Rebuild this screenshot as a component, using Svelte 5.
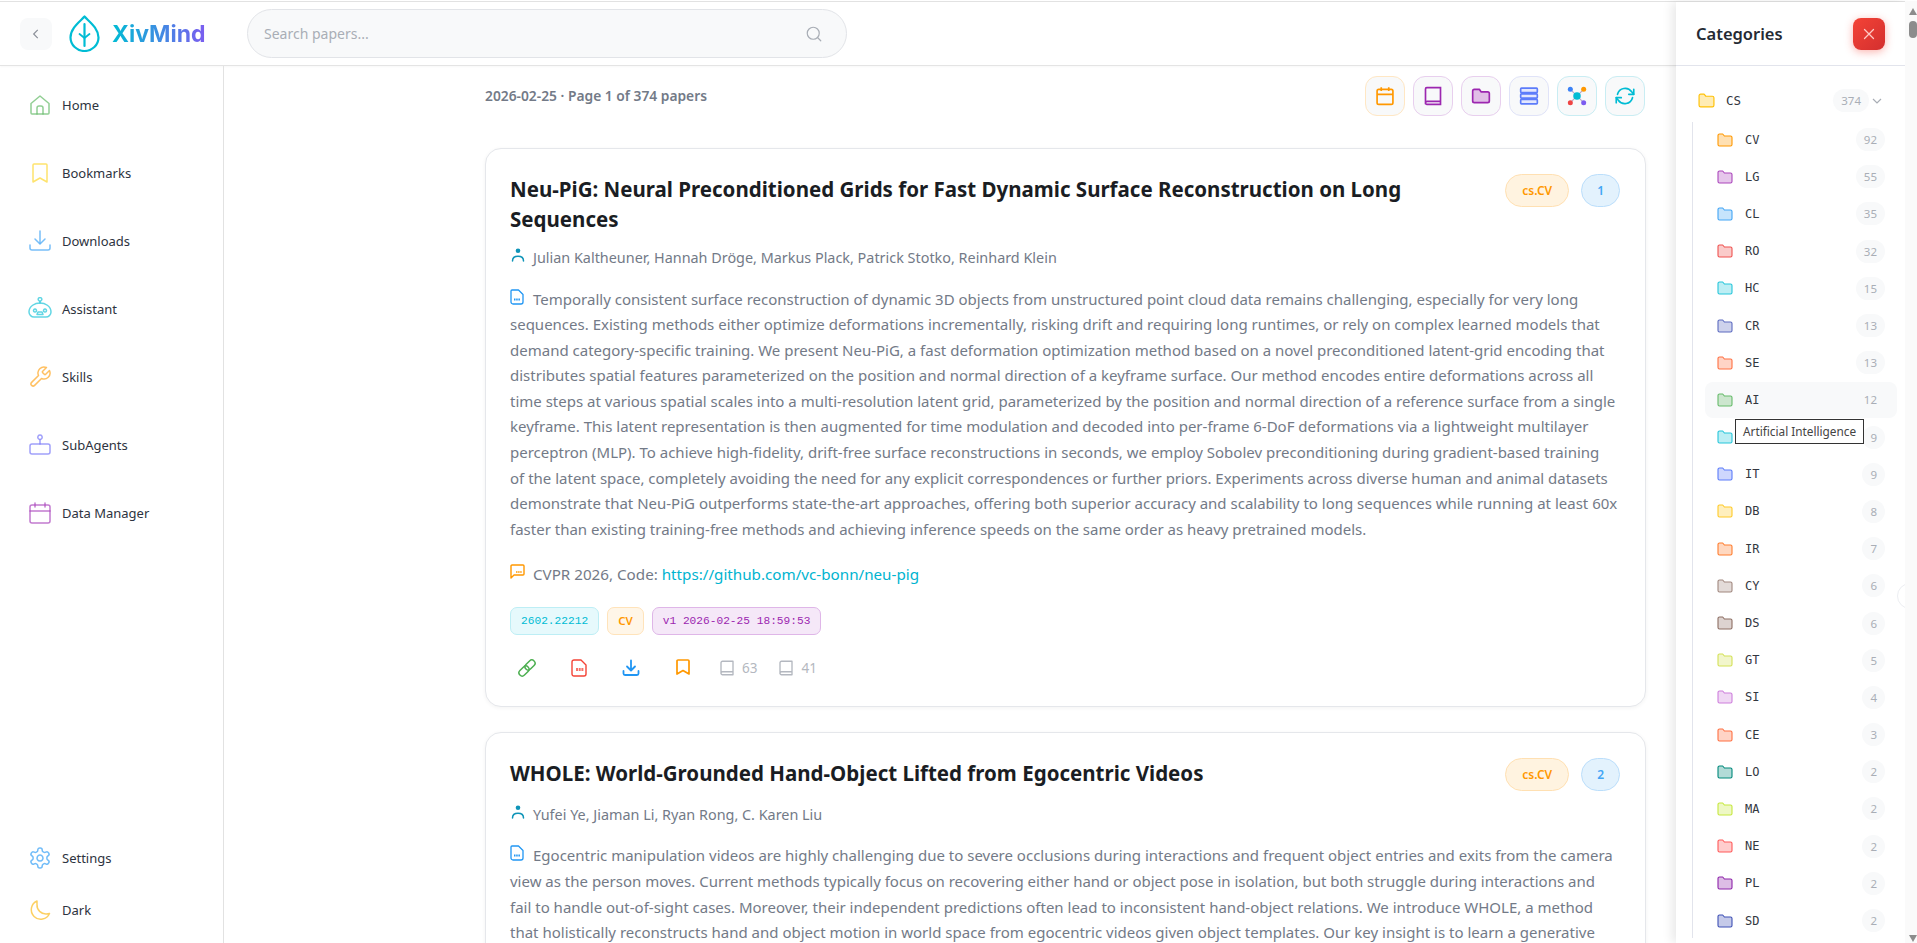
<script>
	const navTop = [
		{ label: 'Home', color: '#66bb6a', paths: ['M3 10.5 12 3l9 7.5V20a1 1 0 0 1-1 1H4a1 1 0 0 1-1-1z', 'M9 21v-6a2 2 0 0 1 2-2h2a2 2 0 0 1 2 2v6'] },
		{ label: 'Bookmarks', color: '#fdd835', paths: ['M6 3h12a1 1 0 0 1 1 1v17l-7-4-7 4V4a1 1 0 0 1 1-1z'] },
		{ label: 'Downloads', color: '#42a5f5', paths: ['M12 2v12', 'M7 10l5 5 5-5', 'M2 16v3a2 2 0 0 0 2 2h16a2 2 0 0 0 2-2v-3'] },
		{ label: 'Assistant', color: '#26c6da', paths: ['M12 6C7 6 1 9 1 15c0 3 2.500 5 5 5h12c2.500 0 5-2 5-5 0-6-6-9-11-9z', 'M12 6V4.500', 'M12 .5a1.800 1.800 0 1 0 .01 0z', 'M7 12a1.500 1.500 0 1 0 .01 0z', 'M17 12a1.500 1.500 0 1 0 .01 0z', 'M10 15h4l1 2.500H9z'] },
		{ label: 'Skills', color: '#ffa726', paths: ['M14.7 6.3a1 1 0 0 0 0 1.4l1.6 1.6a1 1 0 0 0 1.4 0l3.77-3.77a6 6 0 0 1-7.94 7.94l-6.91 6.91a2.12 2.12 0 0 1-3-3l6.91-6.91a6 6 0 0 1 7.94-7.94l-3.76 3.76z'] },
		{ label: 'SubAgents', color: '#7c7cf8', paths: ['M4 11h16a2 2 0 0 1 2 2v6a2 2 0 0 1-2 2H4a2 2 0 0 1-2-2v-6a2 2 0 0 1 2-2z', 'M12 11V7', 'M12 2a2.2 2.2 0 1 0 .01 0z'] },
		{ label: 'Data Manager', color: '#ab47bc', paths: ['M4 4h16a2 2 0 0 1 2 2v14a2 2 0 0 1-2 2H4a2 2 0 0 1-2-2V6a2 2 0 0 1 2-2z', 'M2 10h20', 'M7 2v4', 'M17 2v4'] }
	];
	const navBottom = [
		{ label: 'Settings', color: '#42a5f5', paths: ['M12.22 2h-.44a2 2 0 0 0-2 2v.18a2 2 0 0 1-1 1.73l-.43.25a2 2 0 0 1-2 0l-.15-.08a2 2 0 0 0-2.73.73l-.22.38a2 2 0 0 0 .73 2.73l.15.1a2 2 0 0 1 1 1.72v.51a2 2 0 0 1-1 1.74l-.15.09a2 2 0 0 0-.73 2.73l.22.38a2 2 0 0 0 2.73.73l.15-.08a2 2 0 0 1 2 0l.43.25a2 2 0 0 1 1 1.73V20a2 2 0 0 0 2 2h.44a2 2 0 0 0 2-2v-.18a2 2 0 0 1 1-1.73l.43-.25a2 2 0 0 1 2 0l.15.08a2 2 0 0 0 2.73-.73l.22-.39a2 2 0 0 0-.73-2.73l-.15-.08a2 2 0 0 1-1-1.74v-.5a2 2 0 0 1 1-1.74l.15-.09a2 2 0 0 0 .73-2.73l-.22-.38a2 2 0 0 0-2.73-.73l-.15.08a2 2 0 0 1-2 0l-.43-.25a2 2 0 0 1-1-1.73V4a2 2 0 0 0-2-2z', 'M12 9a3 3 0 1 0 .01 0z'] },
		{ label: 'Dark', color: '#fbc02d', paths: ['M9 3a9.5 9.5 0 1 0 12.5 12.5c-1 .3-2 .5-3 .5A9 9 0 0 1 9 6.5c0-1.2 0-2.4 0-3.5z'] }
	];

	const categories = [
		['CV', 92, '#ff9800'], ['LG', 55, '#ab47bc'], ['CL', 35, '#42a5f5'], ['RO', 32, '#ef5350'],
		['HC', 15, '#26c6da'], ['CR', 13, '#5c6bc0'], ['SE', 13, '#ff7043'], ['AI', 12, '#66bb6a'],
		['MM', 9, '#26c6da'], ['IT', 9, '#5c7cfa'], ['DB', 8, '#ffca28'], ['IR', 7, '#ff7d2e'],
		['CY', 6, '#a1887f'], ['DS', 6, '#8d6e63'], ['GT', 5, '#d4e157'], ['SI', 4, '#ce7fdc'],
		['CE', 3, '#ff7043'], ['LO', 2, '#00897b'], ['MA', 2, '#c6e83e'], ['NE', 2, '#ff5a5a'],
		['PL', 2, '#8e24aa'], ['SD', 2, '#3f51b5']
	];

	const papers = [
		{
			title: ['Neu-PiG: Neural Preconditioned Grids for Fast Dynamic Surface Reconstruction on Long', 'Sequences'],
			num: 1,
			authors: 'Julian Kaltheuner, Hannah Dröge, Markus Plack, Patrick Stotko, Reinhard Klein',
			abstract: [
				'Temporally consistent surface reconstruction of dynamic 3D objects from unstructured point cloud data remains challenging, especially for very long',
				'sequences. Existing methods either optimize deformations incrementally, risking drift and requiring long runtimes, or rely on complex learned models that',
				'demand category-specific training. We present Neu-PiG, a fast deformation optimization method based on a novel preconditioned latent-grid encoding that',
				'distributes spatial features parameterized on the position and normal direction of a keyframe surface. Our method encodes entire deformations across all',
				'time steps at various spatial scales into a multi-resolution latent grid, parameterized by the position and normal direction of a reference surface from a single',
				'keyframe. This latent representation is then augmented for time modulation and decoded into per-frame 6-DoF deformations via a lightweight multilayer',
				'perceptron (MLP). To achieve high-fidelity, drift-free surface reconstructions in seconds, we employ Sobolev preconditioning during gradient-based training',
				'of the latent space, completely avoiding the need for any explicit correspondences or further priors. Experiments across diverse human and animal datasets',
				'demonstrate that Neu-PiG outperforms state-the-art approaches, offering both superior accuracy and scalability to long sequences while running at least 60x',
				'faster than existing training-free methods and achieving inference speeds on the same order as heavy pretrained models.'
			],
			full: true
		},
		{
			title: ['WHOLE: World-Grounded Hand-Object Lifted from Egocentric Videos'],
			num: 2,
			authors: 'Yufei Ye, Jiaman Li, Ryan Rong, C. Karen Liu',
			abstract: [
				'Egocentric manipulation videos are highly challenging due to severe occlusions during interactions and frequent object entries and exits from the camera',
				'view as the person moves. Current methods typically focus on recovering either hand or object pose in isolation, but both struggle during interactions and',
				'fail to handle out-of-sight cases. Moreover, their independent predictions often lead to inconsistent hand-object relations. We introduce WHOLE, a method',
				'that holistically reconstructs hand and object motion in world space from egocentric videos given object templates. Our key insight is to learn a generative'
			],
			full: false
		}
	];
</script>

{#snippet book(size)}
	<svg width={size} height={size} viewBox="0 0 24 24" fill="none" stroke="currentColor" stroke-width="1.8" stroke-linejoin="round">
		<path d="M4 20V5a2 2 0 0 1 2-2h14v18H6a2 2 0 0 1-2-2 2 2 0 0 1 2-2h14" />
	</svg>
{/snippet}

{#snippet folder(color, w, h)}
	<svg width={w} height={h} viewBox="0 0 16 14" fill="none" style="color:{color}">
		<path d="M1 2.5a1.5 1.5 0 0 1 1.5-1.5h3.2L7.4 3h6.1A1.5 1.5 0 0 1 15 4.5v7a1.5 1.5 0 0 1-1.5 1.5h-11A1.5 1.5 0 0 1 1 11.500z" fill="currentColor" fill-opacity=".3" stroke="currentColor" stroke-width="1.1" stroke-linejoin="round" />
	</svg>
{/snippet}

<div class="app">
	<div class="page">
		<header class="topbar">
			<button class="back" aria-label="Collapse">
				<svg width="14" height="14" viewBox="0 0 24 24" fill="none" stroke="#8a8f98" stroke-width="2"><path d="M15 5l-7 7 7 7" /></svg>
			</button>
			<div class="logo">
				<svg width="31" height="37" viewBox="0 0 31 37" fill="none" stroke="#00bcd4" stroke-width="2.2" stroke-linecap="round" stroke-linejoin="round">
					<path d="M15.500 1.500C11 6.500 1.500 13 1.500 22.500a14 13.500 0 0 0 28 0C29.500 13 20 6.500 15.500 1.500z" />
					<path d="M15.500 9v22" />
					<path d="M15.500 23l-5-4M15.500 23l5-4" stroke-width="1.8" />
				</svg>
				<span class="brand">XivMind</span>
			</div>
			<div class="search">
				<span>Search papers...</span>
				<svg width="18" height="18" viewBox="0 0 24 24" fill="none" stroke="#a8adb5" stroke-width="1.6" stroke-linecap="round"><circle cx="11" cy="11" r="8" /><path d="M21 21l-4.300-4.300" /></svg>
			</div>
		</header>

		<div class="body">
			<nav class="sidebar">
				<div class="nav-top">
					{#each navTop as item}
						<div class="nav-item">
							<svg width="24" height="24" viewBox="0 0 24 24" fill="none" stroke={item.color} stroke-opacity=".72" stroke-width="1.5" stroke-linejoin="round" stroke-linecap="round">
								{#each item.paths as d}<path {d} />{/each}
							</svg>
							<span>{item.label}</span>
						</div>
					{/each}
				</div>
				<div class="nav-bottom">
					{#each navBottom as item}
						<div class="nav-item">
							<svg width="24" height="24" viewBox="0 0 24 24" fill="none" stroke={item.color} stroke-opacity=".75" stroke-width="1.5" stroke-linejoin="round" stroke-linecap="round">
								{#each item.paths as d}<path {d} />{/each}
							</svg>
							<span>{item.label}</span>
						</div>
					{/each}
				</div>
			</nav>

			<main class="main">
				<div class="content">
					<div class="toolbar">
						<span class="summary">2026-02-25 · Page 1 of 374 papers</span>
						<div class="tools">
							<button class="tool" style="border-color:#ffe7c4" aria-label="Date">
								<svg width="20" height="20" viewBox="0 0 24 24" fill="none" stroke="#ff9800" stroke-width="2"><rect x="2.500" y="4" width="19" height="18" rx="2" /><path d="M2.500 10h19M7.500 1.500V6M16.500 1.500V6" /></svg>
							</button>
							<button class="tool" style="border-color:#e8cfee" aria-label="Library">
								<svg width="20" height="20" viewBox="0 0 24 24" fill="none" stroke="#9c27b0" stroke-width="2"><path d="M3 22V3.500A1.500 1.500 0 0 1 4.500 2H21v20H4.500A1.500 1.500 0 0 1 3 20.500 2 2 0 0 1 5 18.500h16" /></svg>
							</button>
							<button class="tool" style="border-color:#e8cfee" aria-label="Folders">
								<svg width="20" height="20" viewBox="0 0 24 24" fill="#e1bee7" stroke="#9c27b0" stroke-width="2" stroke-linejoin="round"><path d="M2 6a2 2 0 0 1 2-2h6l2 3h8a2 2 0 0 1 2 2v9a2 2 0 0 1-2 2H4a2 2 0 0 1-2-2z" /></svg>
							</button>
							<button class="tool" style="border-color:#e0e3f8" aria-label="Layout">
								<svg width="20" height="20" viewBox="0 0 24 24" fill="#e3e7fd" stroke="#5c7cfa" stroke-width="2"><rect x="2" y="2.500" width="20" height="5.500" rx="1" /><rect x="2" y="9.500" width="20" height="5" rx="1" /><rect x="2" y="16" width="20" height="5.500" rx="1" /></svg>
							</button>
							<button class="tool" style="border-color:#c9edf3" aria-label="Graph">
								<svg width="20" height="20" viewBox="0 0 24 24" stroke="#b9a9c9" stroke-width="1.500"><path d="M4 4l16 16M20 4L4 20" /><circle cx="12" cy="12" r="4.500" fill="#00bcd4" stroke="none" /><circle cx="4" cy="4" r="3" fill="#3b82f6" stroke="none" /><circle cx="20" cy="4" r="3" fill="#ff9800" stroke="none" /><circle cx="4" cy="20" r="3" fill="#ef4444" stroke="none" /><circle cx="20" cy="20" r="3" fill="#7c5cf0" stroke="none" /></svg>
							</button>
							<button class="tool" style="border-color:#c9edf3" aria-label="Refresh">
								<svg width="20" height="20" viewBox="0 0 24 24" fill="none" stroke="#00bcd4" stroke-width="2" stroke-linecap="round" stroke-linejoin="round"><path d="M3 10a9.500 9.500 0 0 1 17-3l2.500 3" /><path d="M22.500 4v6h-6" /><path d="M21 14a9.500 9.500 0 0 1-17 3l-2.500-3" /><path d="M1.500 20v-6h6" /></svg>
							</button>
						</div>
					</div>

					{#each papers as paper}
						<article class="card">
							<div class="card-head">
								<h2>{#each paper.title as line}<span class="line">{line}</span>{/each}</h2>
								<div class="chips">
									<span class="chip chip-cat">cs.CV</span>
									<span class="chip chip-num">{paper.num}</span>
								</div>
							</div>
							<p class="authors">
								<svg width="16" height="16" viewBox="0 0 16 16" fill="none" stroke="#0e94b8" stroke-width="1.500" stroke-linecap="round"><circle cx="8" cy="3.800" r="2.300" fill="#0e94b8" stroke="none" /><path d="M2.500 14c0-3 2.400-4.700 5.500-4.700s5.500 1.700 5.500 4.700" /></svg>
								{paper.authors}
							</p>
							<div class="abstract">
								{#each paper.abstract as line, i}
									<span class="line">
										{#if i === 0}
											<svg class="abs-icon" width="14" height="16" viewBox="0 0 14 16" fill="none" stroke="#2196f3" stroke-width="1.300" stroke-linejoin="round"><path d="M2 1h6.500L13 5.500V13a2 2 0 0 1-2 2H3a2 2 0 0 1-2-2V2a1 1 0 0 1 1-1z" /><path d="M4 10.500h6" stroke-width="2" stroke-dasharray="1.500 .7" /></svg>
										{/if}{line}
									</span>
								{/each}
							</div>
							{#if paper.full}
								<p class="comment">
									<svg class="note-icon" width="15" height="15" viewBox="0 0 15 15" fill="none" stroke="#ff9800" stroke-width="1.400" stroke-linejoin="round"><path d="M1 2a1 1 0 0 1 1-1h11a1 1 0 0 1 1 1v8a1 1 0 0 1-1 1H4l-3 3z" /><path d="M6 8h6" stroke-width="1.500" stroke-dasharray="1.500 .6" /></svg>
									CVPR 2026, Code: <span class="link">https://github.com/vc-bonn/neu-pig</span>
								</p>
								<div class="tags">
									<span class="tag tag-id">2602.22212</span>
									<span class="tag tag-cat">CV</span>
									<span class="tag tag-ver">v1 2026-02-25 18:59:53</span>
								</div>
								<div class="actions">
									<span class="act">
										<svg width="18" height="18" viewBox="0 0 18 18" fill="none" stroke="#4caf50" stroke-width="1.500"><g transform="rotate(-45 9 9)"><rect x="-1" y="5.800" width="11.500" height="6.400" rx="3.200" /><rect x="7.500" y="5.800" width="11.500" height="6.400" rx="3.200" /></g></svg>
									</span>
									<span class="act">
										<svg width="16" height="18" viewBox="0 0 16 18" fill="none" stroke="#f44336" stroke-width="1.400" stroke-linejoin="round"><path d="M3 1h7l5 5v9a2 2 0 0 1-2 2H3a2 2 0 0 1-2-2V3a2 2 0 0 1 2-2z" /><path d="M5 10.500h8" stroke-width="3" stroke-opacity=".75" stroke-dasharray="2 .7" /></svg>
									</span>
									<span class="act">
										<svg width="18" height="18" viewBox="0 0 18 18" fill="none" stroke="#2196f3" stroke-width="1.800" stroke-linecap="round" stroke-linejoin="round"><path d="M9 1.500v9.500M5 7.500 9 11.500l4-4" /><path d="M1.500 12v2.500A1.500 1.500 0 0 0 3 16h12a1.500 1.500 0 0 0 1.500-1.500V12" /></svg>
									</span>
									<span class="act">
										<svg width="14" height="17" viewBox="0 0 14 17" fill="none" stroke="#ff9800" stroke-width="1.700" stroke-linejoin="round"><path d="M2 1h10a1 1 0 0 1 1 1v13l-6-3.500L1 15V2a1 1 0 0 1 1-1z" /></svg>
									</span>
									<span class="stat">{@render book(18)} 63</span>
									<span class="stat">{@render book(18)} 41</span>
								</div>
							{/if}
						</article>
					{/each}
				</div>
			</main>
		</div>

		<aside class="panel">
			<div class="panel-head">
				<span class="panel-title">Categories</span>
				<button class="close" aria-label="Close">
					<svg width="12" height="12" viewBox="0 0 12 12" stroke="#ffc9c4" stroke-width="1.300" stroke-linecap="round"><path d="M1.500 1.500l9 9M10.500 1.500l-9 9" /></svg>
				</button>
			</div>
			<div class="tree">
				<div class="parent">
					{@render folder('#ffc107', 17, 15)}
					<span class="code">CS</span>
					<span class="count">374</span>
					<svg class="chev" width="12" height="12" viewBox="0 0 12 12" fill="none" stroke="#a8adb5" stroke-width="1.200"><path d="M2 4l4 4 4-4" /></svg>
				</div>
				<div class="children">
					{#each categories as [code, count, color]}
						<div class="row" class:active={code === 'AI'}>
							{@render folder(color, 16, 14)}
							<span class="code">{code === 'MM' ? '' : code}</span>
							<span class="count">{count}</span>
						</div>
					{/each}
				</div>
			</div>
			<div class="tooltip">Artificial Intelligence</div>
			<div class="handle"><span>‹</span></div>
		</aside>
	</div>

	<div class="scrollbar" aria-hidden="true">
		<span class="arrow up"></span>
		<span class="thumb"></span>
		<span class="arrow down"></span>
	</div>
</div>

<style>
	:global(body) {
		overflow: hidden;
		font-family: 'Noto Sans', sans-serif;
		background: #fff;
	}

	.app {
		display: flex;
		height: 943px;
		padding-top: 1px;
		box-sizing: border-box;
		overflow: hidden;
	}

	.page {
		flex: 1;
		min-width: 0;
		position: relative;
		display: flex;
		flex-direction: column;
		border-top: 1px solid #e2e2e2;
	}

	.topbar {
		height: 63px;
		flex: none;
		display: flex;
		align-items: center;
		padding-left: 20px;
		border-bottom: 1px solid #e4e4e4;
		box-shadow: 0 1px 2px rgba(0, 0, 0, 0.03);
	}

	button {
		padding: 0;
		border: none;
		display: flex;
		align-items: center;
		justify-content: center;
	}

	.back {
		width: 32px;
		height: 32px;
		border-radius: 8px;
		background: #f8f9fa;
	}

	.logo {
		display: flex;
		align-items: center;
		gap: 12px;
		margin-left: 17px;
		width: 178px;
	}

	.brand {
		font-family: Inter, sans-serif;
		font-size: 23px;
		font-weight: 700;
		background: linear-gradient(90deg, #00bcd4, #7c5cf0);
		-webkit-background-clip: text;
		background-clip: text;
		color: transparent;
	}

	.search {
		width: 600px;
		height: 49px;
		box-sizing: border-box;
		display: flex;
		align-items: center;
		justify-content: space-between;
		padding: 0 23px 0 16px;
		background: #f8f9fa;
		border: 1px solid #e2e4e8;
		border-radius: 25px;
		font-size: 14px;
		color: #a9aeb6;
	}

	.body {
		flex: 1;
		min-height: 0;
		display: flex;
	}

	.sidebar {
		width: 195px;
		flex: none;
		border-right: 1px solid #e2e2e2;
		display: flex;
		flex-direction: column;
		justify-content: space-between;
		padding: 5px 0 0 28px;
		box-sizing: content-box;
	}

	.nav-top {
		display: flex;
		flex-direction: column;
	}

	.nav-item {
		height: 68px;
		display: flex;
		align-items: center;
		gap: 10px;
		font-size: 13px;
		color: #2d3340;
	}

	.nav-bottom {
		display: flex;
		flex-direction: column;
		padding-bottom: 7px;
	}

	.nav-bottom .nav-item {
		height: 52px;
	}

	.main {
		flex: 1;
		min-width: 0;
		overflow: hidden;
		padding-left: 2px;
	}

	.content {
		width: 1161px;
		margin: 0 auto;
		display: flex;
		flex-direction: column;
		gap: 25px;
	}

	.toolbar {
		display: flex;
		align-items: center;
		justify-content: space-between;
		padding-top: 10px;
		margin-bottom: 7px;
	}

	.summary {
		font-size: 13.800px;
		font-weight: 600;
		color: #737a87;
		margin-bottom: 2px;
	}

	.tools {
		display: flex;
		gap: 8px;
		margin-right: 1px;
	}

	.tool {
		width: 40px;
		height: 40px;
		box-sizing: border-box;
		border: 1px solid;
		border-radius: 12px;
		background: #f8f9fa;
	}

	.card {
		border: 1px solid #e5e7eb;
		border-radius: 16px;
		padding: 25px 24px 26px;
		box-shadow: 0 1px 4px rgba(0, 0, 0, 0.05);
		background: #fff;
	}

	.card-head {
		display: flex;
		justify-content: space-between;
		align-items: flex-start;
	}

	h2 {
		margin: 0;
		font-size: 20.500px;
		font-weight: 700;
		line-height: 30px;
		color: #1a1d23;
	}

	.line {
		display: block;
		white-space: nowrap;
	}

	.chips {
		display: flex;
		gap: 12px;
		margin-right: 1px;
	}

	.chip {
		height: 33px;
		box-sizing: border-box;
		display: flex;
		align-items: center;
		padding: 0 16px;
		border: 1px solid;
		border-radius: 17px;
		font-size: 12px;
		font-weight: 600;
	}

	.chip-cat {
		background: #fff3e0;
		border-color: #ffe0b2;
		color: #ff9800;
	}

	.chip-num {
		padding: 0 15px;
		background: #e3f2fd;
		border-color: #bbdefb;
		color: #42a5f5;
	}

	.authors {
		margin: 11px 0 0;
		font-size: 14.400px;
		line-height: 25.500px;
		color: #737a87;
		display: flex;
		align-items: center;
		gap: 7px;
	}

	.authors svg {
		margin-top: -5px;
	}

	.abstract {
		margin-top: 16px;
		font-size: 15px;
		line-height: 25.600px;
		color: #737a87;
	}

	.abs-icon {
		vertical-align: 0;
		margin-right: 9px;
	}

	.note-icon {
		vertical-align: 1px;
		margin-right: 4px;
	}

	.comment {
		margin: 20px 0 0;
		font-size: 15.200px;
		line-height: 25.500px;
		color: #737a87;
	}

	.link {
		color: #00b4d0;
	}

	.tags {
		display: flex;
		gap: 8px;
		margin-top: 19px;
	}

	.tag {
		height: 28px;
		box-sizing: border-box;
		display: flex;
		align-items: center;
		padding: 0 10px;
		border: 1px solid;
		border-radius: 7px;
		font-family: 'Liberation Mono', monospace;
		font-size: 11.200px;
	}

	.tag-id {
		background: #e6f9fc;
		border-color: #bdeef5;
		color: #00bcd4;
	}

	.tag-cat {
		background: #fff6e8;
		border-color: #ffe3ba;
		color: #ff9800;
		font-family: 'Noto Sans', sans-serif;
		font-size: 11.500px;
		font-weight: 600;
	}

	.tag-ver {
		background: #f5e8f8;
		border-color: #dfb6e8;
		color: #9c27b0;
	}

	.actions {
		display: flex;
		align-items: center;
		gap: 18px;
		height: 24px;
		margin-top: 21px;
	}

	.act {
		width: 34px;
		display: flex;
		justify-content: center;
	}

	.stat {
		display: flex;
		align-items: center;
		gap: 6px;
		font-size: 13.500px;
		color: #b4b8c0;
		margin-right: 2px;
	}

	.panel {
		position: absolute;
		top: 0;
		right: 0;
		bottom: 0;
		width: 229px;
		background: #fff;
		box-shadow: -4px 0 10px rgba(0, 0, 0, 0.09);
		display: flex;
		flex-direction: column;
	}

	.panel-head {
		height: 64px;
		flex: none;
		box-sizing: border-box;
		display: flex;
		align-items: center;
		justify-content: space-between;
		padding: 0 20px;
		border-bottom: 1px solid #e2e4ec;
	}

	.panel-title {
		font-size: 16.500px;
		font-weight: 600;
		color: #252a33;
	}

	.close {
		width: 32px;
		height: 32px;
		border-radius: 8px;
		background: linear-gradient(135deg, #f44336, #d32f2f);
		box-shadow: 0 2px 8px rgba(244, 67, 54, 0.4);
	}

	.tree {
		padding: 17px 0 0;
	}

	.parent {
		height: 35px;
		display: flex;
		align-items: center;
		padding: 0 36px 0 22px;
		position: relative;
	}

	.parent .code {
		margin-left: 11px;
		font-size: 12.500px;
	}

	.code {
		font-family: 'DejaVu Sans Mono', monospace;
		font-size: 12px;
		color: #33373f;
		margin-left: 12px;
		flex: 1;
	}

	.count {
		height: 23px;
		padding: 0 8px;
		border-radius: 12px;
		background: #f8f9fa;
		font-size: 11.500px;
		line-height: 23px;
		text-align: center;
		color: #a9aeb6;
	}

	.chev {
		position: absolute;
		right: 22px;
		top: 12px;
	}

	.children {
		margin: 4px 0 0 16px;
		border-left: 1px solid #e2e4ec;
		padding-left: 12px;
		display: flex;
		flex-direction: column;
		gap: 2px;
	}

	.row {
		height: 35.200px;
		box-sizing: border-box;
		display: flex;
		align-items: center;
		margin-right: 8px;
		padding: 0 12px;
		border-radius: 8px;
	}

	.row.active {
		background: #f8f9fa;
	}

	.row.active .count {
		background: transparent;
	}

	.tooltip {
		position: absolute;
		left: 59px;
		top: 417px;
		padding: 0 7px;
		height: 25px;
		box-sizing: border-box;
		line-height: 23px;
		border: 1px solid #333;
		background: #fff;
		font-size: 11.800px;
		color: #444;
		white-space: nowrap;
	}

	.handle {
		position: absolute;
		right: -18px;
		top: 581px;
		width: 26px;
		height: 26px;
		border-radius: 50%;
		border: 1px solid #eceef2;
		background: #fff;
		color: #a9aeb6;
		font-size: 12px;
		line-height: 24px;
		padding-left: 7px;
		box-sizing: border-box;
	}

	.scrollbar {
		width: 12px;
		flex: none;
		position: relative;
		z-index: 1;
		background: #fafafa;
		display: flex;
		flex-direction: column;
		align-items: center;
		padding: 7px 0 1px 3px;
		box-sizing: border-box;
	}

	.arrow {
		width: 0;
		height: 0;
		border-left: 4.500px solid transparent;
		border-right: 4.500px solid transparent;
	}

	.up {
		border-bottom: 7px solid #8c8c8c;
	}

	.down {
		border-top: 7px solid #8c8c8c;
		margin-top: auto;
	}

	.thumb {
		width: 8px;
		height: 17px;
		margin-top: 6px;
		border-radius: 4px;
		background: #8c8c8c;
	}
</style>
